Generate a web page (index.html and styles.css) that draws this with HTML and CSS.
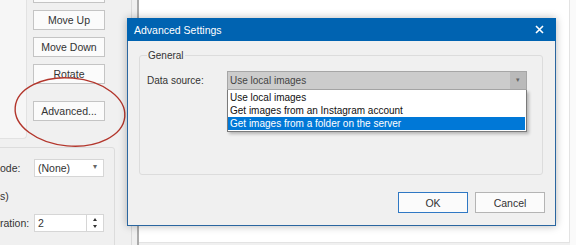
FILE: index.html
```html
<!doctype html>
<html lang="en">
  <head>
    <meta charset="UTF-8" />
    <meta name="viewport" content="width=device-width, initial-scale=1.0" />
    <title>Advanced Settings</title>
    <link rel="stylesheet" href="styles.css">
  </head>
  <body>
    <div class="screen">
      <!-- Editor sidebar behind the dialog -->
      <div class="sidebar">
        <div class="top-area">
          <div class="list-panel"></div>
          <div class="button-column">
            <button class="btn btn-cut"></button>
            <button class="btn">Move Up</button>
            <button class="btn">Move Down</button>
            <button class="btn">Rotate</button>
            <button class="btn btn-advanced">Advanced...</button>
          </div>
        </div>

        <div class="options-group">
          <div class="opt-row">
            <span class="opt-label">ode:</span>
            <div class="select">(None)<span class="caret">&#9662;</span></div>
          </div>
          <div class="opt-row opt-note">
            <span class="opt-label">s)</span>
          </div>
          <div class="opt-row opt-spin">
            <span class="opt-label">ration:</span>
            <div class="spin">
              <span class="spin-value">2</span>
              <span class="spin-buttons">
                <span class="spin-up"></span>
                <span class="spin-down"></span>
              </span>
            </div>
          </div>
        </div>
      </div>
      <div class="splitter"></div>
      <div class="canvas"></div>
      <div class="edge"></div>

      <!-- Red annotation round the Advanced button -->
      <svg class="annotation" width="576" height="245" viewBox="0 0 576 245">
        <ellipse cx="70" cy="112" rx="55" ry="34" transform="rotate(5 70 112)" />
      </svg>

      <!-- Advanced Settings dialog -->
      <div class="dialog">
        <div class="dialog-title">
          <span>Advanced Settings</span>
          <svg class="close-icon" width="9" height="9" viewBox="0 0 9 9">
            <path d="M1 1 L8 8 M8 1 L1 8" />
          </svg>
        </div>
        <div class="dialog-body">
          <fieldset class="group">
            <legend>General</legend>
            <div class="field-row">
              <label class="field-label">Data source:</label>
              <div class="combo">
                <span class="combo-value">Use local images</span>
                <span class="combo-arrow">&#9662;</span>
                <ul class="combo-list">
                  <li>Use local images</li>
                  <li>Get images from an Instagram account</li>
                  <li class="selected">Get images from a folder on the server</li>
                </ul>
              </div>
            </div>
          </fieldset>
          <div class="dialog-buttons">
            <button class="btn dlg-btn btn-default">OK</button>
            <button class="btn dlg-btn">Cancel</button>
          </div>
        </div>
      </div>
    </div>
  </body>
</html>
```

FILE: styles.css
```css
body {
  margin: 0;
  font-family: "Liberation Sans", Arial, sans-serif;
  font-size: 10px;
  color: #1e1e1e;
  background-color: #f0f0f0;
}
.screen {
  position: relative;
  width: 576px;
  height: 245px;
  overflow: hidden;
  display: flex;
  background-color: #f0f0f0;
}

/* sidebar */
.sidebar {
  width: 132px;
  height: 245px;
  border-right: 1px solid #dadada;
  box-sizing: border-box;
}
.top-area {
  display: flex;
  height: 140px;
}
.list-panel {
  width: 27px;
  height: 139px;
  background-color: #f6f6f6;
  border-right: 1px solid #e2e2e2;
  border-bottom: 1px solid #e2e2e2;
  border-bottom-right-radius: 4px;
  box-sizing: border-box;
}
.button-column {
  display: flex;
  flex-direction: column;
  gap: 7px;
  margin-left: 6px;
  margin-top: -17px;
}
.btn {
  font-family: "Liberation Sans", Arial, sans-serif;
  font-size: 10.5px;
  color: #333;
  background-color: #fbfbfb;
  border: 1px solid #c4c4c4;
  padding: 0;
  height: 20px;
  width: 72px;
}
.btn-advanced {
  margin-top: 10px;
}
.options-group {
  margin-top: 7px;
  margin-left: -4px;
  width: 119px;
  height: 110px;
  border: 1px solid #dcdcdc;
  border-radius: 3px;
  padding: 11px 0 0 3px;
  box-sizing: border-box;
  font-size: 10.5px;
  color: #333;
}
.opt-row {
  display: flex;
  align-items: center;
  height: 18px;
}
.opt-note {
  margin-top: 10px;
}
.opt-spin {
  margin-top: 9px;
}
.opt-label {
  width: 34px;
}
.select {
  position: relative;
  width: 70px;
  height: 18px;
  background-color: #fff;
  border: 1px solid #d6d6d6;
  box-sizing: border-box;
  padding: 2px 0 0 3px;
}
.caret {
  position: absolute;
  right: 6px;
  top: 2px;
  font-size: 8px;
  color: #666;
}
.spin {
  display: flex;
  width: 70px;
  height: 18px;
  background-color: #fff;
  border: 1px solid #d6d6d6;
  box-sizing: border-box;
}
.spin-value {
  flex: 1;
  padding: 2px 0 0 3px;
}
.spin-buttons {
  width: 16px;
  border-left: 1px solid #d6d6d6;
  display: flex;
  flex-direction: column;
  align-items: center;
  justify-content: center;
  gap: 4px;
}
.spin-up,
.spin-down {
  width: 0;
  height: 0;
  border-left: 2px solid transparent;
  border-right: 2px solid transparent;
}
.spin-up {
  border-bottom: 3px solid #333;
}
.spin-down {
  border-top: 3px solid #333;
}

.splitter {
  width: 5px;
  border-right: 2px solid #ababab;
}
.canvas {
  width: 430px;
  height: 242px;
  background-color: #fff;
  border-right: 1px solid #e3e3e3;
  border-bottom: 1px solid #e3e3e3;
}
.edge {
  flex: 1;
  background-color: #fafafa;
}

.annotation {
  position: absolute;
  left: 0;
  top: 0;
}
.annotation ellipse {
  fill: none;
  stroke: #b3362c;
  stroke-width: 1.4;
}

/* dialog */
.dialog {
  position: absolute;
  left: 127px;
  top: 18px;
  width: 429px;
  height: 208px;
  background-color: #f0f0f0;
  border: 1px solid #2a66a0;
  box-sizing: border-box;
  box-shadow: 0 0 8px rgba(0, 0, 0, 0.28);
}
.dialog-title {
  display: flex;
  align-items: center;
  justify-content: space-between;
  height: 23px;
  margin: -1px -1px 0 -1px;
  padding: 0 12px 0 7px;
  background-color: #0063b1;
  color: #fff;
  font-size: 10.5px;
}
.close-icon path {
  stroke: #fff;
  stroke-width: 1.6;
}
.dialog-body {
  padding: 9px 11px 0 11px;
}
.group {
  margin: 0;
  height: 125px;
  width: 404px;
  border: 1px solid #dcdcdc;
  border-radius: 3px;
  padding: 10px 0 0 7px;
  box-sizing: border-box;
}
.group legend {
  padding: 0 1px;
  margin-left: 0;
  color: #333;
}
.field-row {
  display: flex;
  align-items: center;
}
.field-label {
  width: 80px;
  color: #333;
}
.combo {
  position: relative;
  display: flex;
  width: 300px;
  height: 19px;
  background-color: #cccccc;
  border: 1px solid #a6a6a6;
  box-sizing: border-box;
}
.combo-value {
  flex: 1;
  padding: 3px 0 0 2px;
  color: #444;
}
.combo-arrow {
  width: 16px;
  background-color: #bababa;
  color: #666;
  font-size: 7px;
  text-align: center;
  padding-top: 4px;
  box-sizing: border-box;
}
.combo-list {
  position: absolute;
  left: -1px;
  top: 18px;
  width: 300px;
  margin: 0;
  padding: 1px 1px 1px 0;
  list-style: none;
  background-color: #fff;
  border: 1px solid #7a7a7a;
  border-top: none;
  box-sizing: border-box;
  box-shadow: 2px 2px 3px rgba(0, 0, 0, 0.25);
  color: #111;
}
.combo-list li {
  height: 13px;
  line-height: 13px;
  padding-left: 2px;
}
.combo-list li.selected {
  background-color: #0078d7;
  color: #fff;
}
.dialog-buttons {
  display: flex;
  justify-content: flex-end;
  gap: 7px;
  margin-top: 17px;
  margin-right: -1px;
}
.dlg-btn {
  width: 70px;
  height: 21px;
  border-color: #b4b4b4;
}
.btn-default {
  border-color: #2f78c4;
}
```
